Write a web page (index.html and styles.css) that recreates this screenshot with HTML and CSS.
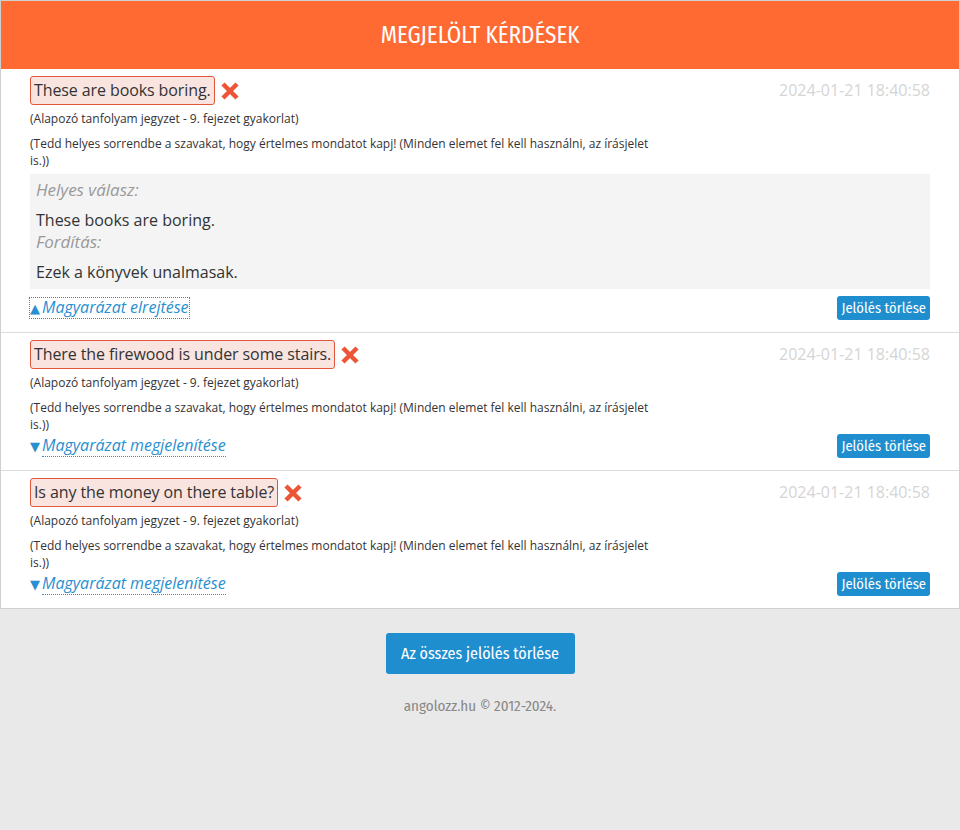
FILE: index.html
```html
<!DOCTYPE html>
<html lang="hu">
<head>
    <meta charset="UTF-8">
    <title>Megjelölt kérdések</title>
    <link rel="stylesheet" href="styles.css">
</head>
<body>
    <div class="panel">
        <h1 class="panel-title">Megjelölt kérdések</h1>

        <!-- first marked question, explanation open -->
        <div class="item">
            <div class="item-head">
                <span class="question">These are books boring.</span>
                <svg class="cross" width="18" height="18" viewBox="0 0 18 18"><path d="M2 2L16 16M16 2L2 16" stroke="#ec5636" stroke-width="4.5"/></svg>
                <span class="date">2024-01-21 18:40:58</span>
            </div>
            <div class="source">(Alapozó tanfolyam jegyzet - 9. fejezet gyakorlat)</div>
            <div class="task">(Tedd helyes sorrendbe a szavakat, hogy értelmes mondatot kapj! (Minden elemet fel kell használni, az írásjelet is.))</div>
            <div class="answer">
                <div class="label">Helyes válasz:</div>
                <p>These books are boring.</p>
                <div class="label">Fordítás:</div>
                <p>Ezek a könyvek unalmasak.</p>
            </div>
            <div class="item-foot">
                <a class="toggle open" href="#"><span class="arrow">▲</span>Magyarázat elrejtése</a>
                <button class="btn btn-small">Jelölés törlése</button>
            </div>
        </div>

        <div class="item">
            <div class="item-head">
                <span class="question">There the firewood is under some stairs.</span>
                <svg class="cross" width="18" height="18" viewBox="0 0 18 18"><path d="M2 2L16 16M16 2L2 16" stroke="#ec5636" stroke-width="4.5"/></svg>
                <span class="date">2024-01-21 18:40:58</span>
            </div>
            <div class="source">(Alapozó tanfolyam jegyzet - 9. fejezet gyakorlat)</div>
            <div class="task">(Tedd helyes sorrendbe a szavakat, hogy értelmes mondatot kapj! (Minden elemet fel kell használni, az írásjelet is.))</div>
            <div class="item-foot">
                <a class="toggle" href="#"><span class="arrow">▼</span><span class="toggle-text">Magyarázat megjelenítése</span></a>
                <button class="btn btn-small">Jelölés törlése</button>
            </div>
        </div>

        <div class="item">
            <div class="item-head">
                <span class="question">Is any the money on there table?</span>
                <svg class="cross" width="18" height="18" viewBox="0 0 18 18"><path d="M2 2L16 16M16 2L2 16" stroke="#ec5636" stroke-width="4.5"/></svg>
                <span class="date">2024-01-21 18:40:58</span>
            </div>
            <div class="source">(Alapozó tanfolyam jegyzet - 9. fejezet gyakorlat)</div>
            <div class="task">(Tedd helyes sorrendbe a szavakat, hogy értelmes mondatot kapj! (Minden elemet fel kell használni, az írásjelet is.))</div>
            <div class="item-foot">
                <a class="toggle" href="#"><span class="arrow">▼</span><span class="toggle-text">Magyarázat megjelenítése</span></a>
                <button class="btn btn-small">Jelölés törlése</button>
            </div>
        </div>
    </div>

    <div class="bottom">
        <button class="btn btn-large">Az összes jelölés törlése</button>
        <p class="footer-text">angolozz.hu © 2012-2024.</p>
    </div>
</body>
</html>
```

FILE: styles.css
```css
/* styles.css */

body {
    margin: 0;
    background-color: #e9e9e9;
    font-family: 'Open Sans', sans-serif;
    color: #333;
}

.panel {
    background-color: #fff;
    border: 1px solid #cfcfcf;
}

.panel-title {
    margin: 0;
    height: 68px;
    line-height: 68px;
    background-color: #ff6a33;
    color: #fff;
    text-align: center;
    text-transform: uppercase;
    font-family: 'Fira Sans Condensed', 'Roboto', sans-serif;
    font-weight: normal;
    font-size: 23px;
}

.item {
    padding: 7px 29px 12px;
    border-top: 1px solid #dcdcdc;
}

.panel-title + .item {
    border-top: none;
}

.item-head {
    display: flex;
    align-items: center;
}

.question {
    display: inline-block;
    padding: 1px 3px 2px;
    line-height: 24px;
    font-size: 16px;
    letter-spacing: -0.1px;
    background-color: #f9e4e0;
    border: 1px solid #e2573c;
    border-radius: 3px;
}

.cross {
    margin-left: 6px;
}

.date {
    margin-left: auto;
    align-self: flex-start;
    padding-top: 3px;
    font-size: 16px;
    color: #d5d5d5;
}

.source {
    margin-top: 5px;
    font-size: 12px;
    line-height: 17px;
}

.task {
    margin-top: 8px;
    max-width: 625px;
    font-size: 12px;
    line-height: 17px;
}

.answer {
    margin-top: 5px;
    padding: 5px 6px 6px;
    background-color: #f4f4f4;
    font-size: 16px;
    line-height: 22px;
}

.answer .label {
    font-style: italic;
    font-size: 17px;
    color: #999;
}

.answer p {
    margin: 8px 0 0;
}

.item-foot {
    display: flex;
    justify-content: space-between;
    align-items: center;
    margin-top: 1px;
}

.answer + .item-foot {
    margin-top: 7px;
}

.toggle {
    color: #2a8fd0;
    font-style: italic;
    font-size: 16px;
    line-height: 19px;
    text-decoration: none;
}

.toggle.open {
    outline: 1px dotted #2a8fd0;
}

.toggle-text {
    border-bottom: 1px dotted #2a8fd0;
}

.arrow {
    display: inline-block;
    margin-right: 2px;
    font-style: normal;
    font-size: 13px;
    font-family: 'DejaVu Sans', sans-serif;
}

.btn {
    border: none;
    border-radius: 3px;
    background-color: #1e8ecf;
    color: #fff;
    font-family: 'Fira Sans Condensed', 'Roboto', sans-serif;
    white-space: nowrap;
    cursor: pointer;
}

.btn-small {
    height: 24px;
    padding: 0 4px;
    font-size: 14.5px;
}

.btn-large {
    height: 41px;
    width: 189px;
    padding: 0;
    font-size: 16px;
}

.bottom {
    padding-top: 24px;
    text-align: center;
}

.footer-text {
    margin: 23px 0 0;
    font-family: 'Fira Sans Condensed', 'Roboto', sans-serif;
    font-size: 15px;
    color: #888;
}
```
